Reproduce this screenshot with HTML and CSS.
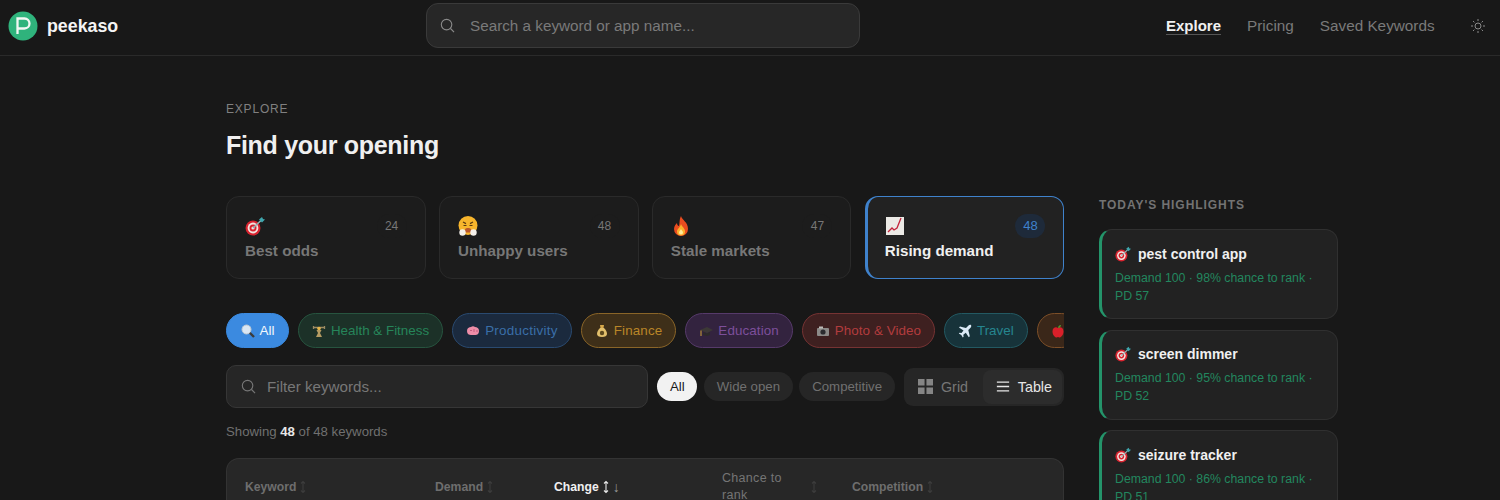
FILE: index.html
```html
<!DOCTYPE html>
<html lang="en">
<head>
<meta charset="utf-8">
<title>peekaso</title>
<link rel="stylesheet" href="styles.css">
</head>
<body>
<svg class="defs" width="0" height="0" aria-hidden="true">
  <symbol id="dart" viewBox="0 0 20 20">
    <circle cx="8" cy="12" r="7.5" fill="#d8232f"/><circle cx="8" cy="12" r="5.4" fill="#f3e4e0"/><circle cx="8" cy="12" r="3.5" fill="#d8232f"/><circle cx="8" cy="12" r="1.6" fill="#f3e4e0"/>
    <path d="M8 12 16 4.5" stroke="#8fb3b5" stroke-width="1.5"/><path d="M14 3.5 17 1l1 2 2 .5-3 3z" fill="#3fa6ad"/>
  </symbol>
  <symbol id="huff" viewBox="0 0 20 20">
    <circle cx="10" cy="9.500" r="9.500" fill="#f7b52c"/><path d="M5 6l3 1.600M15 6l-3 1.600" stroke="#5b3a12" stroke-width="1.200"/><path d="M5.500 9.500h3M11.500 9.500h3" stroke="#5b3a12" stroke-width="1"/><path d="M7 13.500c0-2 6-2 6 0v3H7z" fill="#b8562a"/><circle cx="4.500" cy="16.500" r="3.200" fill="#f4f0ea"/><circle cx="15.500" cy="16.500" r="3.200" fill="#f4f0ea"/>
  </symbol>
  <symbol id="fire" viewBox="0 0 20 20">
    <path d="M10 0c1 4 7 6 7 13a7 7 0 0 1-14 0c0-3 2-5 3-6 0 2 1 3 2 3 1-3 0-6 2-10z" fill="#ea4c1f"/><path d="M10 8c1 3 4 4 4 7.500a4 4 0 0 1-8 0C6 13 9 12 10 8z" fill="#fbb02c"/><path d="M10 13c.5 1.500 2 2 2 3.500a2 2 0 0 1-4 0c0-1.200 1.500-2 2-3.500z" fill="#fdeb9c"/>
  </symbol>
  <symbol id="chart" viewBox="0 0 20 20">
    <rect x="1" y="1" width="18" height="18" fill="#eceae6"/><path d="M3 16l4-4 2 2 3-2 4-10" fill="none" stroke="#c3243b" stroke-width="1.300"/>
  </symbol>
  <symbol id="mag" viewBox="0 0 14 14">
    <path d="M8 8l5 5" stroke="#3b3b3b" stroke-width="2.400"/><circle cx="5.500" cy="5.500" r="4.500" fill="#d9e7f4" stroke="#bfc9d2"/>
  </symbol>
  <symbol id="lift" viewBox="0 0 14 14">
    <path d="M1.500 2v3M12.500 2v3M1.500 3.500h11" stroke="#9c8a62" stroke-width="1.300"/><circle cx="7" cy="4.500" r="1.800" fill="#e5b64a"/><path d="M4.500 6h5L8 9l2 4H4l2-4z" fill="#b59b62"/>
  </symbol>
  <symbol id="brain" viewBox="0 0 14 14">
    <path d="M1 7c0-3 2-4 4-4 1-1 3-1 4 0 2 0 4 1 4 4s-2 4-3.500 4H5C3 11 1 10 1 7z" fill="#ee8da8"/><path d="M4 6.500h2M8 5v3M10 7h2" stroke="#c45b7c"/>
  </symbol>
  <symbol id="money" viewBox="0 0 14 14">
    <path d="M5 1h4L8.500 4h-3z" fill="#d6a84a"/><path d="M5 4h4c2 2 3 4 3 6 0 2-2 3-5 3s-5-1-5-3c0-2 1-4 3-6z" fill="#e3c06c"/><circle cx="7" cy="9" r="2.200" fill="#5f4a1e"/>
  </symbol>
  <symbol id="cap" viewBox="0 0 14 14">
    <path d="M1 6l7-3 6 3-6 3z" fill="#3c3836"/><path d="M4 8v3l4 1 3-1V8L8 9.500z" fill="#2d2a29"/><path d="M2 6.500V12" stroke="#d0a33a"/>
  </symbol>
  <symbol id="camera" viewBox="0 0 14 14">
    <rect x="1" y="4" width="12" height="8" rx="1" fill="#8c8a88"/><rect x="3" y="2.500" width="4" height="2" fill="#bdbbb8"/><circle cx="7" cy="8" r="2.600" fill="#2b2b2e"/>
  </symbol>
  <symbol id="plane" viewBox="0 0 14 14">
    <path d="M13 1c-1-.5-2 0-3 1L8 4 2 2.500 1 3.500 5.500 6.500 3.500 9 1.500 8.700l-.7.8 2.500 1.500L4.800 13.500l.8-.7L5.300 10.800 7.800 8.800 10.800 13.200l1-1L10.300 6 12.300 4c1-1 1.200-2.200.7-3z" fill="#dbeaf6"/>
  </symbol>
  <symbol id="apple" viewBox="0 0 14 14">
    <path d="M7 4C5 2.500 1.500 3.500 1.500 7.500 1.500 11 4 13.500 5.500 13.500c.7 0 1-.4 1.500-.4s.8.4 1.500.4c1.500 0 4-2.500 4-6C12.500 3.500 9 2.500 7 4z" fill="#d9202a"/><path d="M7 4c0-1.500 1-3 3-3 0 1.500-1 3-3 3z" fill="#4f9a2e"/>
  </symbol>
  <symbol id="search" viewBox="0 0 16 16">
    <circle cx="7" cy="7" r="5.600" fill="none" stroke="currentColor" stroke-width="1.200"/><path d="M11.200 11.200 15 15" stroke="currentColor" stroke-width="1.200"/>
  </symbol>
  <symbol id="updown" viewBox="0 0 8 14">
    <path d="M4 1.500v11M2 3.500l2-2 2 2M2 10.500l2 2 2-2" fill="none" stroke="currentColor" stroke-width="1.100"/>
  </symbol>
</svg>

<header class="topbar">
  <a class="brand" href="#">
    <svg class="logo" viewBox="0 0 30 30" aria-hidden="true"><circle cx="15" cy="15" r="14.500" fill="#2fb37c"/><path d="M9.500 23V7.500h7a5 5 0 0 1 0 10H10" fill="none" stroke="#f2f7f4" stroke-width="2.300"/></svg>
    <span class="brand-name">peekaso</span>
  </a>
  <label class="global-search">
    <svg class="icon-search"><use href="#search"/></svg>
    <span>Search a keyword or app name...</span>
  </label>
  <nav class="nav">
    <a class="nav-link active" href="#">Explore</a>
    <a class="nav-link" href="#">Pricing</a>
    <a class="nav-link" href="#">Saved Keywords</a>
    <svg class="sun" viewBox="0 0 16 16" aria-hidden="true"><circle cx="8" cy="8" r="3" fill="none" stroke="#8a8a8a"/><path d="M8 1v2M8 13v2M1 8h2M13 8h2M3 3l1.400 1.400M11.600 11.600 13 13M3 13l1.400-1.400M11.600 4.400 13 3" stroke="#8a8a8a"/></svg>
  </nav>
</header>

<div class="page">
  <main class="main">
    <p class="eyebrow">EXPLORE</p>
    <h1 class="title">Find your opening</h1>

    <section class="cards">
      <article class="card">
        <div class="card-top"><svg class="emoji"><use href="#dart"/></svg><span class="count">24</span></div>
        <div class="card-name">Best odds</div>
      </article>
      <article class="card">
        <div class="card-top"><svg class="emoji"><use href="#huff"/></svg><span class="count">48</span></div>
        <div class="card-name">Unhappy users</div>
      </article>
      <article class="card">
        <div class="card-top"><svg class="emoji"><use href="#fire"/></svg><span class="count">47</span></div>
        <div class="card-name">Stale markets</div>
      </article>
      <article class="card selected">
        <div class="card-top"><svg class="emoji"><use href="#chart"/></svg><span class="count">48</span></div>
        <div class="card-name">Rising demand</div>
      </article>
    </section>

    <section class="chips">
      <span class="chip chip-all"><svg class="mini"><use href="#mag"/></svg>All</span>
      <span class="chip chip-green"><svg class="mini"><use href="#lift"/></svg>Health &amp; Fitness</span>
      <span class="chip chip-blue"><svg class="mini"><use href="#brain"/></svg>Productivity</span>
      <span class="chip chip-amber"><svg class="mini"><use href="#money"/></svg>Finance</span>
      <span class="chip chip-purple"><svg class="mini"><use href="#cap"/></svg>Education</span>
      <span class="chip chip-red"><svg class="mini"><use href="#camera"/></svg>Photo &amp; Video</span>
      <span class="chip chip-teal"><svg class="mini"><use href="#plane"/></svg>Travel</span>
      <span class="chip chip-orange"><svg class="mini"><use href="#apple"/></svg></span>
    </section>

    <section class="filters">
      <label class="filter-input">
        <svg class="icon-filter"><use href="#search"/></svg>
        <span>Filter keywords...</span>
      </label>
      <div class="pills">
        <span class="pill on">All</span>
        <span class="pill">Wide open</span>
        <span class="pill">Competitive</span>
      </div>
      <div class="segment">
        <span class="seg">
          <svg class="seg-icon" viewBox="0 0 16 16" aria-hidden="true"><path d="M0 0h7v7H0zM9 0h7v7H9zM0 9h7v7H0zM9 9h7v7H9z" fill="#858585"/></svg>Grid
        </span>
        <span class="seg on">
          <svg class="seg-icon" viewBox="0 0 16 16" aria-hidden="true"><path d="M1 3h14M1 8h14M1 13h14" stroke="#e6e6e6" stroke-width="1.600"/></svg>Table
        </span>
      </div>
    </section>

    <p class="showing">Showing <b>48</b> of 48 keywords</p>

    <section class="table">
      <div class="thead">
        <span class="th">Keyword<svg class="sort"><use href="#updown"/></svg></span>
        <span class="th">Demand<svg class="sort"><use href="#updown"/></svg></span>
        <span class="th th-active">Change<svg class="sort"><use href="#updown"/></svg><span class="arrow">↓</span></span>
        <span class="th th-wrap"><span class="th-label">Chance to rank</span><svg class="sort"><use href="#updown"/></svg></span>
        <span class="th">Competition<svg class="sort"><use href="#updown"/></svg></span>
      </div>
    </section>
  </main>

  <aside class="side">
    <h2 class="side-title">TODAY'S HIGHLIGHTS</h2>
    <article class="hl">
      <div class="hl-name"><svg class="hl-emoji"><use href="#dart"/></svg>pest control app</div>
      <p class="hl-meta">Demand 100 · 98% chance to rank · PD 57</p>
    </article>
    <article class="hl">
      <div class="hl-name"><svg class="hl-emoji"><use href="#dart"/></svg>screen dimmer</div>
      <p class="hl-meta">Demand 100 · 95% chance to rank · PD 52</p>
    </article>
    <article class="hl">
      <div class="hl-name"><svg class="hl-emoji"><use href="#dart"/></svg>seizure tracker</div>
      <p class="hl-meta">Demand 100 · 86% chance to rank · PD 51</p>
    </article>
  </aside>
</div>
</body>
</html>
```

FILE: styles.css
```css
* { box-sizing: border-box; }
html, body { margin: 0; height: 500px; overflow: hidden; }
body { background: #181818; color: #f0f0f0; font-family: "Liberation Sans", Arial, sans-serif; }
a { text-decoration: none; color: inherit; }
p, h1, h2 { margin: 0; }
.defs { position: absolute; }

.topbar { height: 56px; border-bottom: 1px solid #2a2a2a; display: grid; grid-template-columns: 418px 434px 1fr; align-items: center; padding: 0 0 4px 8px; }
.brand { display: flex; align-items: center; gap: 9px; font-size: 17.800px; font-weight: 700; color: #f4f4f4; }
.brand-name { margin-top: 2px; }
.logo { width: 30px; height: 30px; }
.global-search { height: 45px; border: 1px solid #3a3a3a; border-radius: 12px; background: #272727; display: flex; align-items: center; gap: 15px; padding-left: 13px; color: #7a7a7a; font-size: 15.250px; }
.icon-search { width: 15px; height: 15px; color: #8a8a8a; }
.nav { display: flex; align-items: center; padding-left: 306px; gap: 26px; font-size: 15.300px; color: #7a7a7a; }
.nav-link { padding: 1px 0 0; border-bottom: 1px solid transparent; }
.nav-link.active { color: #f0f0f0; font-weight: 700; font-size: 15px; border-bottom-color: #555; }
.sun { width: 16px; height: 16px; margin-left: 9px; }

.page { display: flex; gap: 34px; padding: 0 0 0 226px; }
.main { width: 839px; flex: none; }
.eyebrow { margin-top: 46px; font-size: 12px; line-height: 14px; letter-spacing: .8px; color: #808080; }
.title { margin-top: 13px; font-size: 25px; line-height: 32px; font-weight: 700; letter-spacing: -.3px; color: #f0f0f0; }

.cards { margin-top: 35px; width: 838.400px; display: grid; grid-template-columns: repeat(4, 1fr); gap: 13.300px; }
.card { height: 83px; border: 1px solid #2a2a2a; border-radius: 13px; background: #1c1c1c; padding: 17px 18px 0; }
.card-top { display: flex; justify-content: space-between; align-items: center; height: 24px; }
.emoji { width: 20px; height: 20px; }
.count { min-width: 30px; height: 24px; line-height: 24px; border-radius: 12px; text-align: center; font-size: 12px; color: #777; background: #1c1c1c; }
.card-name { margin-top: 4px; font-size: 15.200px; line-height: 18px; font-weight: 700; color: #777; }
.selected { background: #222; border-color: #3f82cc; border-left: 3px solid #3f82cc; padding-left: 17px; }
.selected .card-name { color: #f0f0f0; }
.selected .count { background: #1e2a3a; color: #3f82cc; font-size: 13px; }

.chips { margin-top: 34px; width: 838px; display: flex; gap: 9px; overflow: hidden; }
.chip { flex: none; height: 35px; display: inline-flex; align-items: center; gap: 5px; padding: 0 13px; border: 1px solid; border-radius: 18px; font-size: 13.400px; white-space: nowrap; }
.mini { width: 14px; height: 14px; }
.chip-all { background: #3b8ae0; border-color: #3b8ae0; color: #f4f8fc; padding: 0 13.500px; }
.chip-green { background: #1c3128; border-color: #27543f; color: #26855a; }
.chip-blue { background: #1b2a3e; border-color: #2a4a70; color: #3a6ea8; letter-spacing: .28px; }
.chip-amber { background: #3e2f19; border-color: #8a6528; color: #b98628; letter-spacing: .14px; }
.chip-purple { background: #33233f; border-color: #563a6a; color: #7d4f9b; letter-spacing: .1px; }
.chip-red { background: #3e2020; border-color: #763333; color: #b23c3e; letter-spacing: .06px; }
.chip-teal { background: #17333a; border-color: #235962; color: #268690; }
.chip-orange { background: #3a2719; border-color: #7d4f28; color: #b8702e; }

.filters { margin-top: 17px; width: 838px; display: flex; align-items: center; justify-content: space-between; }
.filter-input { width: 422px; height: 43px; border: 1px solid #363636; border-radius: 10px; background: #262626; display: flex; align-items: center; gap: 11px; padding-left: 14px; font-size: 15.200px; color: #777; }
.icon-filter { width: 15px; height: 15px; color: #777; }
.pills { display: flex; gap: 6.500px; }
.pill { height: 29px; line-height: 29px; padding: 0 12.800px; border-radius: 15px; background: #262626; font-size: 13.250px; color: #707070; }
.pill.on { background: #f2f2f2; color: #1a1a1a; }
.segment { width: 160px; height: 38px; border-radius: 9px; background: #262626; display: flex; align-items: center; padding: 2px; justify-content: space-between; }
.seg { height: 34px; display: inline-flex; align-items: center; gap: 8px; padding: 0 12px; font-size: 14.300px; color: #767676; }
.seg.on { background: #2c2c2c; color: #e6e6e6; border-radius: 8px; padding: 0 10px 0 13px; }
.seg-icon { width: 15px; height: 15px; }
.seg.on .seg-icon { width: 14px; }

.showing { margin-top: 16px; font-size: 13.200px; line-height: 15px; color: #707070; }
.showing b { font-weight: 700; color: #e8e8e8; }

.table { margin-top: 19px; width: 838px; height: 200px; border: 1px solid #333; border-bottom: 0; border-radius: 13px 13px 0 0; background: #272727; }
.thead { display: grid; grid-template-columns: 190px 119px 168px 130px 1fr; padding-left: 18px; height: 56px; align-items: center; font-size: 12.200px; font-weight: 700; color: #6e6e6e; }
.th { display: flex; align-items: center; gap: 3px; }
.th-active { color: #f0f0f0; }
.th-wrap { gap: 0; font-size: 12.500px; font-weight: 400; letter-spacing: .3px; color: #757575; }
.th-label { width: 88px; line-height: 17px; }
.sort { width: 8px; height: 14px; color: #3c3c3c; }
.th-active .sort { color: #e8e8e8; }
.arrow { font-weight: 400; font-size: 14px; color: #999; }

.side { width: 239px; flex: none; padding-top: 142px; }
.side-title { font-size: 12px; line-height: 14px; font-weight: 700; letter-spacing: .95px; color: #737373; margin-bottom: 17px; }
.hl { height: 90px; margin-bottom: 10.500px; border: 1px solid #303030; border-left: 3px solid #24946a; border-radius: 13px; background: #222; padding: 13.600px 14px 0 13px; }
.hl-name { display: flex; align-items: center; gap: 7px; font-size: 14px; line-height: 20px; font-weight: 700; color: #f0f0f0; }
.hl-emoji { width: 16px; height: 16px; }
.hl-meta { margin-top: 5px; font-size: 12.300px; line-height: 18px; color: #22875f; }
```
